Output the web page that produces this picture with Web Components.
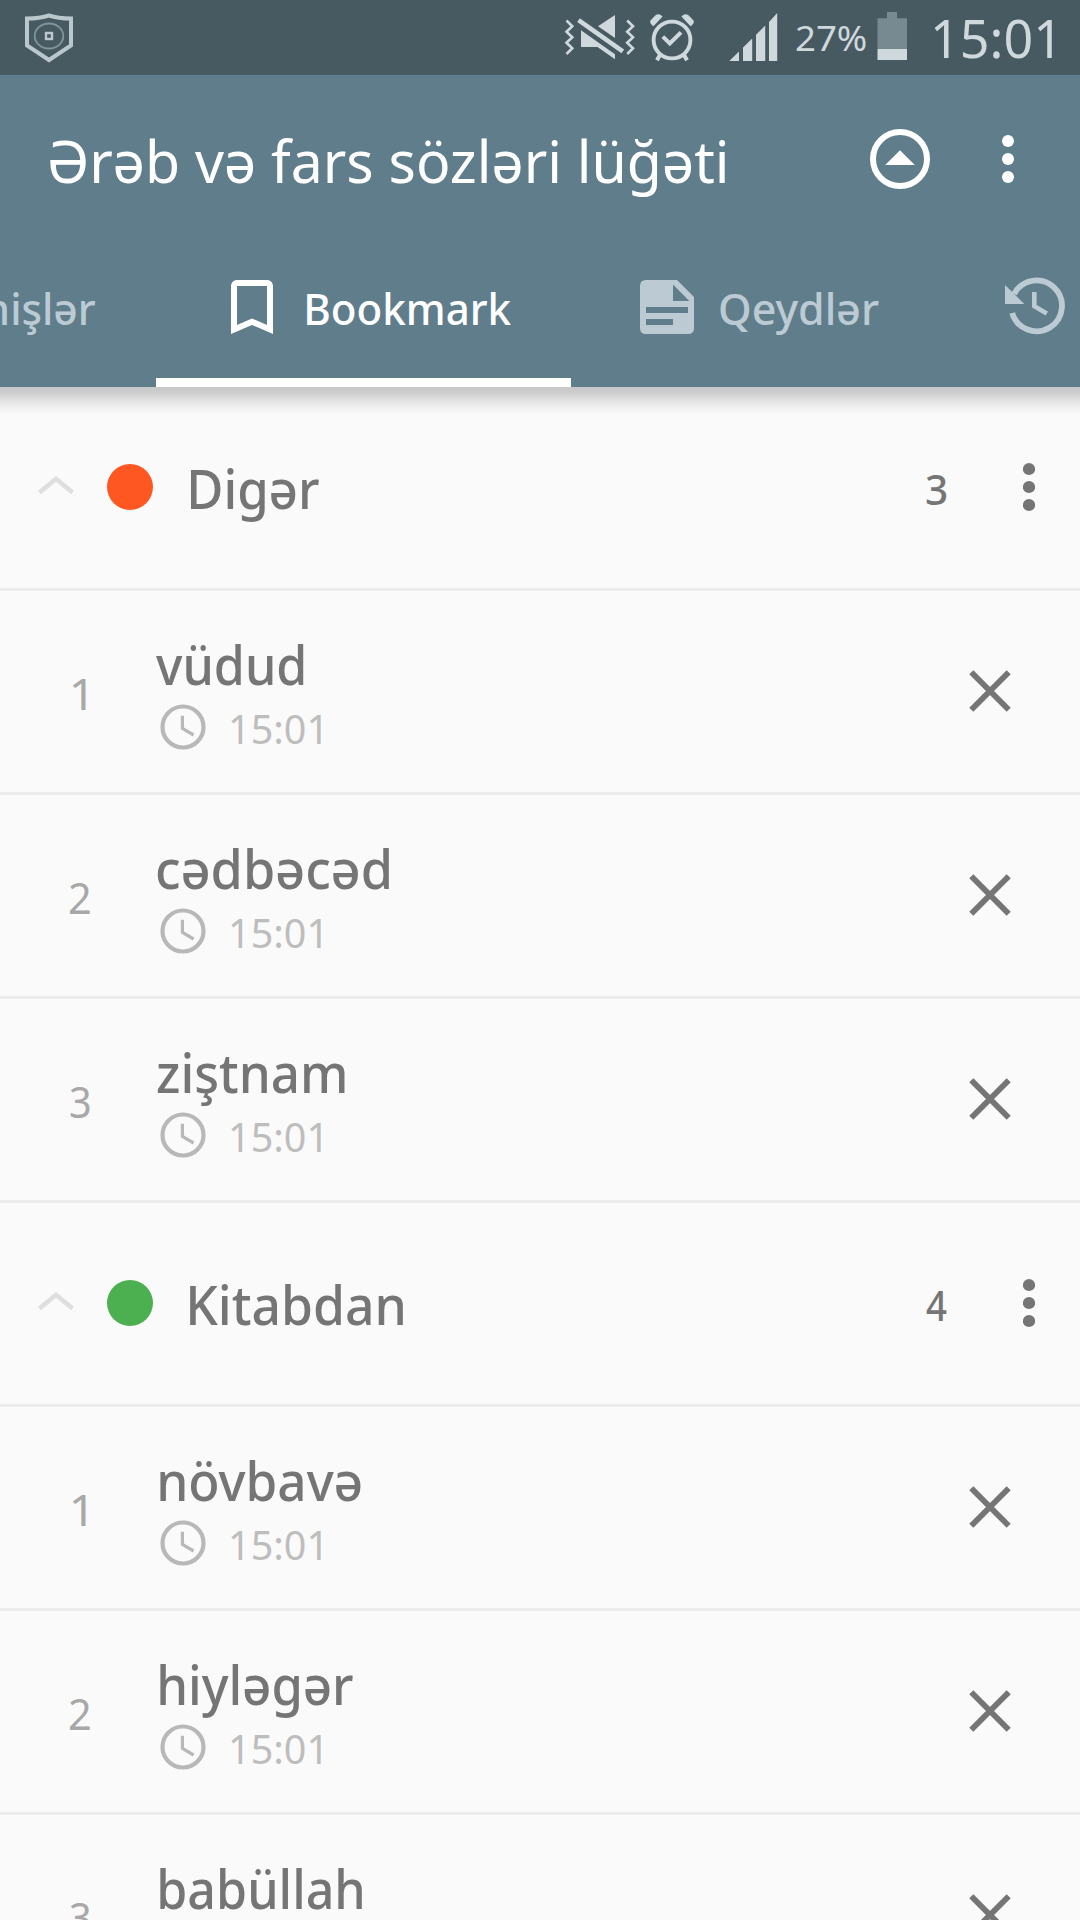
<!DOCTYPE html>
<html lang="az">
<head>
<meta charset="utf-8">
<title>Ərəb və fars sözləri lüğəti</title>
<style>
html,body{margin:0;padding:0;background:#fafafa}
body{width:1080px;height:1920px;overflow:hidden;font-family:"Noto Sans","Open Sans",sans-serif}
</style>
</head>
<body>
<dictionary-app></dictionary-app>
<script>
const FONT='"Noto Sans","Open Sans",sans-serif';
const pen=document.createElement('canvas').getContext('2d');

// One line of text. ink = width of the drawn glyphs, base = baseline below the container's top.
class TextLine extends HTMLElement{
  connectedCallback(){
    if(this.shadowRoot)return;
    const root=this.attachShadow({mode:'open'});
    const size=+this.getAttribute('size'),base=+this.getAttribute('base');
    const weight=this.getAttribute('weight')||400,ink=+this.getAttribute('ink');
    pen.font=`${weight} ${size}px ${FONT}`;
    const m=pen.measureText(this.textContent);
    const natural=m.actualBoundingBoxLeft+m.actualBoundingBoxRight;
    const k=ink?ink/natural:1;
    root.innerHTML=`<style>
      :host{display:block;flex:none;width:${ink||natural}px;height:${size}px;margin-top:${base-.888*size}px;
        font:${weight} ${size}px/${size}px ${FONT};white-space:nowrap}
      span{display:inline-block;transform-origin:0 0;transform:translateX(${m.actualBoundingBoxLeft*k}px) scaleX(${k})}
    </style><span><slot></slot></span>`;
  }
}
customElements.define('text-line',TextLine);

// name: [viewBox, markup]
const ICONS={
shield:['24 0 50 75',`<path d="M27 18.5Q40 18.5 49 15.5Q58 18.5 71 18.5V45.5L49 60L27 45.5Z" fill="none" stroke="#bac7cd" stroke-width="4"/><ellipse cx="49" cy="36" rx="14.3" ry="12.5" fill="none" stroke="#82959d" stroke-width="1.8"/><rect x="46" y="33" width="6" height="6" fill="none" stroke="#bac7cd" stroke-width="2.4"/>`],
mute:['564 0 72 75',`<g fill="none" stroke="currentColor" stroke-width="2.6"><path d="M566.5 20.5L572.3 26.2L566.5 31.8L572.3 37.3L566.5 42.8L572.3 48.3L566.5 54"/><path d="M627.2 20.5L633 26.2L627.2 31.8L633 37.3L627.2 42.8L633 48.3L627.2 54"/><path d="M578.5 20.2L622.8 51.4" stroke-width="4.6"/></g><path fill="currentColor" d="M615 15V38L598 26.3ZM581 30.3L615 54.2V59.3L597.5 47H581Z"/>`],
alarm:['648 0 48 75',`<g fill="none" stroke="currentColor"><circle cx="672" cy="40" r="18.4" stroke-width="3.9"/><path d="M662.8 36.6L669.8 43.4L681 32.3" stroke-width="4"/><path d="M660.2 54.5L657 60.3M683.8 54.5L687 60.3" stroke-width="4"/></g><path fill="currentColor" d="M653.5 26.2Q649 23 650.5 20.4L655.5 15.2Q659 12.5 662.6 16.6ZM690.5 26.2Q695 23 693.5 20.4L688.5 15.2Q685 12.5 681.4 16.6Z"/>`],
signal:['728 0 50 75',`<path fill="currentColor" d="M729.3 61L739 51.5V61ZM743 61V47.5L752.2 38.4V61ZM756 61V34.7L765.2 25.6V61ZM769 61V22L777.2 13V61Z"/>`],
battery:['877 0 30 75',`<path fill="#788a91" d="M877.5 18.3H887V12H897V18.3H907V49H877.5Z"/><rect x="877.5" y="49" width="29.5" height="11" fill="currentColor"/>`],
up:['870 75 60 168',`<circle cx="900" cy="159" r="27" fill="none" stroke="currentColor" stroke-width="6"/><path fill="currentColor" d="M900 150.3L914.8 165H885.2Z"/>`],
more:['1002 75 12 168',`<g fill="currentColor"><circle cx="1008" cy="141" r="6"/><circle cx="1008" cy="159" r="6"/><circle cx="1008" cy="177" r="6"/></g>`],
bookmark:['231 243 42 144',`<path transform="translate(216 271) scale(3)" fill="currentColor" d="M17 3H7c-1.1 0-1.99.9-1.99 2L5 21l7-3 7 3V5c0-1.1-.9-2-2-2zm0 15l-5-2.18L7 18V5h10v13z"/>`],
notes:['640 243 54 144',`<path fill="currentColor" fill-rule="evenodd" d="M646 280H677L694 297V328Q694 334 688 334H646Q640 334 640 328V286Q640 280 646 280ZM673 284.5V301H689.3ZM646 307V313H688V307ZM646 319V325H673V319Z"/>`],
history:['1004 243 62 144',`<path fill="none" stroke="currentColor" stroke-width="5.8" d="M1014.2 293.8A25.4 25.4 0 1 1 1012.2 313"/><path fill="currentColor" d="M1005 285V304H1024.3Z"/><path fill="none" stroke="currentColor" stroke-width="4.6" d="M1034.3 292V306.2L1046.8 313.6"/>`],
chevron:['38 0 37 201',`<path d="M39.5 105.5L56 91.8L72.5 105.5" fill="none" stroke="#dedede" stroke-width="4.4"/>`],
dots:['1023 0 12 201',`<g fill="#757575"><circle cx="1029" cy="82" r="6.1"/><circle cx="1029" cy="100" r="6.1"/><circle cx="1029" cy="118" r="6.1"/></g>`],
close:['969 0 42 201',`<path d="M971.3 81.3L1008.7 118.7M1008.7 81.3L971.3 118.7" stroke="#757575" stroke-width="5.8"/>`],
clock:['160 113 46 46',`<g fill="none" stroke="#b8b8b8"><circle cx="183" cy="136" r="20.5" stroke-width="4.2"/><path d="M182.4 124.7V137.4L193.6 144" stroke-width="3.2"/></g>`]
};
class UiIcon extends HTMLElement{
  connectedCallback(){
    if(this.shadowRoot)return;
    const [box,art]=ICONS[this.getAttribute('name')],[,,w,h]=box.split(' ');
    this.attachShadow({mode:'open'}).innerHTML=`<style>:host{display:block;flex:none;width:${w}px;height:${h}px}svg{display:block}</style>
      <svg width="${w}" height="${h}" viewBox="${box}" aria-hidden="true">${art}</svg>`;
  }
}
customElements.define('ui-icon',UiIcon);

function define(name,html){
  const t=document.createElement('template');t.innerHTML=html;
  customElements.define(name,class extends HTMLElement{
    connectedCallback(){if(!this.shadowRoot)this.attachShadow({mode:'open'}).append(t.content.cloneNode(true));}
  });
}

define('status-bar',`<style>
:host{display:flex;height:75px;background:#475a62;color:#cfd8dc;padding:0 28px 0 24px;box-sizing:border-box;align-items:flex-start}
.gap{flex:1}
</style>
<ui-icon name="shield"></ui-icon><div class="gap"></div>
<ui-icon name="mute" style="margin-right:12px"></ui-icon>
<ui-icon name="alarm" style="margin-right:32px"></ui-icon>
<ui-icon name="signal" style="margin-right:17.5px"></ui-icon>
<text-line size="34.5" base="52" ink="69.5" style="margin-right:12px">27%</text-line>
<ui-icon name="battery" style="margin-right:27px"></ui-icon>
<text-line size="52.5" base="58.8" ink="118">15:01</text-line>`);

define('title-bar',`<style>
:host{display:flex;height:168px;padding:0 66px 0 50px;box-sizing:border-box;color:#fff}
.gap{flex:1}
</style>
<text-line size="58.5" base="107.5" ink="675.5">Ərəb və fars sözləri lüğəti</text-line><div class="gap"></div>
<ui-icon name="up" style="margin-right:72px"></ui-icon><ui-icon name="more"></ui-icon>`);

define('tab-strip',`<style>
:host{display:flex;height:144px;color:#bccbd3;overflow:hidden}
.tab{display:flex;flex:none;height:144px;box-sizing:border-box}
.prev{width:156px;justify-content:flex-end;padding-right:61px;overflow:hidden}
.on{width:415px;padding-left:75px;gap:34px;color:#fff;border-bottom:9px solid #fff}
.on>*{margin-bottom:-9px}
.notes{width:433px;padding-left:69px;gap:26px}
</style>
<div class="tab prev"><text-line size="44" base="82" weight="500" ink="122">mişlər</text-line></div>
<div class="tab on"><ui-icon name="bookmark"></ui-icon><text-line size="44" base="82" weight="500" ink="204.5">Bookmark</text-line></div>
<div class="tab notes"><ui-icon name="notes"></ui-icon><text-line size="44" base="82" weight="500" ink="158.5">Qeydlər</text-line></div>
<div class="tab"><ui-icon name="history"></ui-icon></div>`);

class GroupRow extends HTMLElement{
  connectedCallback(){
    if(this.shadowRoot)return;
    const a=n=>this.getAttribute(n);
    this.attachShadow({mode:'open'}).innerHTML=`<style>
    :host{display:flex;height:204px;box-sizing:border-box;border-bottom:3px solid #ececec;padding:0 45px 0 38px;color:#757575}
    .dot{flex:none;width:46px;height:46px;border-radius:50%;background:${a('color')};margin:77px 37px 0 32.3px}
    .gap{flex:1}.count{flex:none;width:97px;display:flex}
    </style>
    <ui-icon name="chevron"></ui-icon><div class="dot"></div>
    <text-line size="53.5" base="122.3" weight="500" ink="${a('ink')}">${a('name')}</text-line>
    <div class="gap"></div>
    <div class="count"><text-line size="42" base="118" weight="500" ink="${a('cink')}">${a('count')}</text-line></div>
    <ui-icon name="dots"></ui-icon>`;
  }
}
customElements.define('group-row',GroupRow);

class WordRow extends HTMLElement{
  connectedCallback(){
    if(this.shadowRoot)return;
    const a=n=>this.getAttribute(n),n=a('n');
    this.attachShadow({mode:'open'}).innerHTML=`<style>
    :host{display:flex;height:204px;box-sizing:border-box;border-bottom:3px solid #ececec;padding-right:69px;overflow:hidden}
    .n{display:flex;width:160px;flex:none;box-sizing:border-box;padding-left:${n==='1'?71.5:69.5}px;color:#a8a8a8}
    .body{flex:1}
    .word{display:flex;height:113px;color:#757575;margin-left:${a('shift')||0}px}
    .time{display:flex;height:46px;gap:24.5px;color:#bdbdbd}
    </style>
    <div class="n"><text-line size="43.5" base="119.2" ink="${n==='1'?14:20}">${n}</text-line></div>
    <div class="body">
      <div class="word"><text-line size="53.5" base="94.5" weight="500" ink="${a('ink')}">${a('word')}</text-line></div>
      <div class="time"><ui-icon name="clock"></ui-icon><text-line size="40.5" base="41.2" ink="90">15:01</text-line></div>
    </div>
    <ui-icon name="close"></ui-icon>`;
  }
}
customElements.define('word-row',WordRow);

define('dictionary-app',`<style>
:host{display:flex;flex-direction:column;width:1080px;height:1920px;overflow:hidden;background:#fafafa}
header{flex:none;background:#607d8b;height:312px}
main{flex:none;position:relative}
.shade{position:absolute;top:0;left:0;right:0;height:28px;pointer-events:none;
background:linear-gradient(rgba(0,0,0,.2) 0,rgba(0,0,0,.19) 5px,rgba(0,0,0,.1) 13px,rgba(0,0,0,.035) 21px,transparent 28px)}
</style>
<status-bar></status-bar>
<header><title-bar></title-bar><tab-strip></tab-strip></header>
<main>
<div class="shade"></div>
<group-row name="Digər" ink="129" color="#ff5722" count="3" cink="20.3"></group-row>
<word-row n="1" word="vüdud" ink="147.5" shift="-4"></word-row>
<word-row n="2" word="cədbəcəd" ink="232" shift="-3"></word-row>
<word-row n="3" word="ziştnam" ink="188" shift="-3.5"></word-row>
<group-row name="Kitabdan" ink="213.5" color="#4caf50" count="4" cink="21"></group-row>
<word-row n="1" word="növbavə" ink="200.5"></word-row>
<word-row n="2" word="hiyləgər" ink="193"></word-row>
<word-row n="3" word="babüllah" ink="202.5"></word-row>
</main>`);
</script>
</body>
</html>
